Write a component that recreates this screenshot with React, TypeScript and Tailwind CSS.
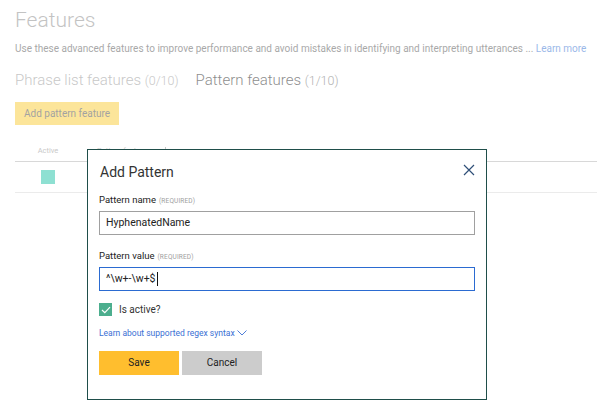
import React from "react";

const font = { fontFamily: 'Roboto, "Open Sans", Arial, sans-serif' };

function CloseIcon() {
    return (
        <svg width="12" height="12" viewBox="0 0 12 12" className="text-[#2f4f78]">
            <path d="M1 1 L11 11 M11 1 L1 11" stroke="currentColor" strokeWidth="1.2" fill="none" />
        </svg>
    );
}

function Chevron() {
    return (
        <svg width="10" height="6" viewBox="0 0 10 6" className="ml-[2px] text-[#3b6fd4]">
            <path d="M0.5 0.5 L5 5 L9.5 0.5" stroke="currentColor" strokeWidth="0.9" fill="none" />
        </svg>
    );
}

function Check() {
    return (
        <svg width="10" height="8" viewBox="0 0 10 8">
            <path d="M1 4 L3.8 6.6 L9 1.2" stroke="white" strokeWidth="1.2" fill="none" />
        </svg>
    );
}

function RequiredTag() {
    return <span className="text-[6.5px] tracking-wide text-[#a0a0a0]">(REQUIRED)</span>;
}

function AddPatternDialog() {
    return (
        <div className="absolute left-[87px] top-[149px] flex h-[251px] w-[400px] flex-col border border-[#1f4e4a] bg-white px-[11px] pt-[12px]">
            <div className="flex items-start justify-between">
                <h2 className="pl-[1px] text-[14px] leading-[20px] text-[#333]">Add Pattern</h2>
                <div className="mt-[2px]">
                    <CloseIcon />
                </div>
            </div>

            <label className="mt-[11px] flex items-baseline gap-[3px] text-[9.5px] leading-[14px] text-[#222]">
                Pattern name
                <RequiredTag />
            </label>
            <div className="mt-[3px] flex h-[24px] w-[376px] items-center border border-[#a0a0a0] px-[6px] text-[10.5px] text-[#222]">
                HyphenatedName
            </div>

            <label className="mt-[14px] flex items-baseline gap-[3px] text-[9.5px] leading-[14px] text-[#222]">
                Pattern value
                <RequiredTag />
            </label>
            <div className="mt-[3px] flex h-[24px] w-[376px] items-center border border-[#2b6bd1] px-[6px] text-[10.5px] text-[#222]">
                <span>^\w+-\w+$</span>
                <span className="ml-[1px] h-[14px] w-px bg-[#111]" />
            </div>

            <div className="mt-[11px] flex items-center gap-[7px]">
                <span className="flex h-[13px] w-[13px] items-center justify-center bg-[#4cae8e]">
                    <Check />
                </span>
                <span className="text-[10px] text-[#333]">Is active?</span>
            </div>

            <div className="mt-[10px] flex items-center text-[8.5px] text-[#3b6fd4]">
                Learn about supported regex syntax
                <Chevron />
            </div>

            <div className="mt-[11px] flex gap-[3px]">
                <button className="h-[24px] w-[80px] bg-[#ffbe2e] text-[10px] text-[#222]">Save</button>
                <button className="h-[24px] w-[80px] bg-[#cccccc] text-[10px] text-[#222]">Cancel</button>
            </div>
        </div>
    );
}

export default function App() {
    return (
        <div className="relative h-[416px] w-[597px] overflow-hidden bg-white" style={font}>
            <div className="pl-[15px] pt-[4px]">
                <h1 className="text-[21px] font-light leading-[32px] text-[#9c9c9c]">Features</h1>
                <p className="mt-[6px] whitespace-nowrap text-[10px] leading-[14px] text-[#6e6e6e]">
                    Use these advanced features to improve performance and avoid mistakes in identifying and interpreting utterances ...{" "}
                    <span className="text-[#5789d9]">Learn more</span>
                </p>
                <div className="mt-[13px] flex items-baseline gap-[17px] font-light">
                    <span className="text-[15px] text-[#a3a3a3]">
                        Phrase list features <span className="text-[12.5px] text-[#a3a3a3]">(0/10)</span>
                    </span>
                    <span className="text-[15px] text-[#3f3f3f]">
                        Pattern features <span className="text-[12.5px] text-[#7c7c7c]">(1/10)</span>
                    </span>
                </div>
                <button className="mt-[10px] flex h-[23px] items-center bg-[#fbd457] px-[9px] text-[10px] text-[#646464]">
                    Add pattern feature
                </button>
            </div>

            <div className="ml-[15px] mt-[16px]">
                <div className="flex h-[21px] items-center border-b border-[#bebebe] text-[7.5px] text-[#a3a3a3]">
                    <span className="w-[66px] text-center">Active</span>
                    <span className="ml-[16px]">Pattern feature</span>
                    <span className="ml-[18px] h-[7px] w-px bg-[#a3a3a3]" />
                </div>
                <div className="flex h-[31px] items-center border-b border-[#dedede]">
                    <span className="ml-[26px] h-[14px] w-[14px] bg-[#43cbb4]" />
                </div>
            </div>

            <div className="absolute inset-0 bg-white/40" />

            <AddPatternDialog />
        </div>
    );
}
